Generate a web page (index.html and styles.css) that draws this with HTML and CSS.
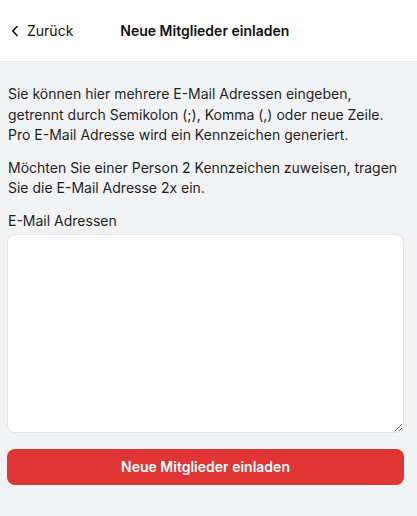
FILE: index.html
```html
<!DOCTYPE html>
<html lang="de">
<head>
<meta charset="utf-8">
<link rel="stylesheet" href="styles.css">
</head>
<body>
<header class="topbar">
  <a class="back" href="#">
    <svg class="chev" width="8" height="12" viewBox="0 0 8 12"><path d="M6 1.5 L1.8 6 L6 10.5" fill="none" stroke="#111" stroke-width="1.6" stroke-linecap="round" stroke-linejoin="round"/></svg>
    <span>Zurück</span>
  </a>
  <h1 class="title">Neue Mitglieder einladen</h1>
</header>
<main class="content">
  <p class="text">Sie können hier mehrere E-Mail Adressen eingeben, getrennt durch Semikolon (;), Komma (,) oder neue Zeile. Pro E-Mail Adresse wird ein Kennzeichen generiert.</p>
  <p class="text">Möchten Sie einer Person 2 Kennzeichen zuweisen, tragen Sie die E-Mail Adresse 2x ein.</p>
  <label class="label" for="emails">E-Mail Adressen</label>
  <textarea id="emails" class="area"></textarea>
  <button class="btn" type="button">Neue Mitglieder einladen</button>
</main>
</body>
</html>
```
FILE: styles.css
```css
html, body {
  margin: 0;
  padding: 0;
  background: #f2f3f5;
  font-family: Inter, "Noto Sans", sans-serif;
  color: #1a1a1a;
}
.topbar {
  height: 61px;
  background: #fff;
  border-bottom: 1px solid #e3e4e8;
  display: flex;
  align-items: center;
}
.back {
  display: flex;
  align-items: center;
  gap: 8px;
  padding-left: 11px;
  font-size: 14px;
  color: #111;
  text-decoration: none;
}
.chev { display: block; }
.title {
  margin: 0 0 0 47px;
  font-size: 14px;
  font-weight: 600;
  color: #111;
}
.content {
  padding: 22px 13px 0 7px;
  display: flex;
  flex-direction: column;
}
.text {
  margin: 0 0 12px 1px;
  font-size: 14px;
  line-height: 20.5px;
  color: #1f1f1f;
}
.label {
  margin: 0 0 3px 1px;
  font-size: 14px;
  line-height: 20px;
  color: #1f1f1f;
}
.area {
  height: 199px;
  box-sizing: border-box;
  border: 1px solid #e3e4e8;
  border-radius: 8px;
  background: #fff;
  resize: vertical;
  margin: 0;
}
.btn {
  margin-top: 16px;
  height: 36px;
  border: none;
  border-radius: 8px;
  background: #e03535;
  color: #fff;
  font-family: Inter, "Noto Sans", sans-serif;
  font-size: 14px;
  font-weight: 600;
}
```
